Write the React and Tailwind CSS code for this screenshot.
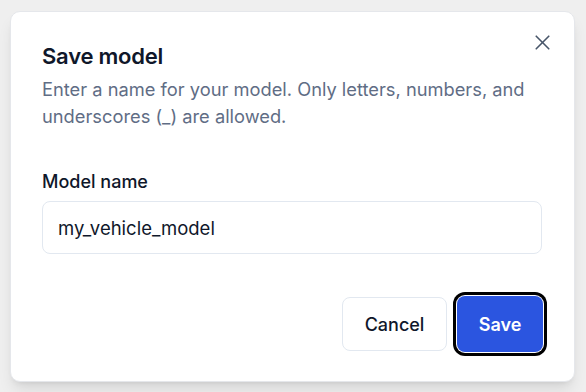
import React, { useState } from "react";
import { X } from "lucide-react";

export default function App() {
  const [name, setName] = useState("my_vehicle_model");

  return (
    <div className="w-[586px] h-[392px] overflow-hidden bg-[#efefef] pl-[10px] pt-[11px] font-['Inter',sans-serif]">
      <div className="relative w-[565px] h-[371px] rounded-[10px] border border-[#e5e7eb] bg-white shadow-lg px-[31px] pt-[30px]">
        <button className="absolute right-[19px] top-[18px] text-[#475569]">
          <X size={25} strokeWidth={1.6} />
        </button>

        <h2 className="text-[22px] leading-[28px] font-semibold text-[#0f172a] tracking-[-0.01em]">
          Save model
        </h2>
        <p className="mt-[6px] text-[18.3px] leading-[27px] text-[#5f6d85]">
          Enter a name for your model. Only letters, numbers, and underscores (_) are allowed.
        </p>

        <label className="block mt-[40px] text-[18px] leading-[24px] font-medium text-[#0f172a]">
          Model name
        </label>
        <input
          value={name}
          onChange={(e) => setName(e.target.value)}
          className="mt-[7px] w-[500px] h-[53px] rounded-lg border border-[#e2e8f0] px-[15px] text-[18.5px] text-[#0f172a] outline-none"
        />

        <div className="flex justify-end gap-[10px] mt-[43px]">
          <button className="w-[105px] h-[54px] rounded-lg border border-[#e2e8f0] bg-white text-[18px] font-medium text-[#0f172a]">
            Cancel
          </button>
          <button className="w-[86px] h-[56px] -mt-[1px] rounded-lg bg-[#2b55e0] text-[18px] font-semibold text-white ring-[3px] ring-black ring-offset-1">
            Save
          </button>
        </div>
      </div>
    </div>
  );
}
